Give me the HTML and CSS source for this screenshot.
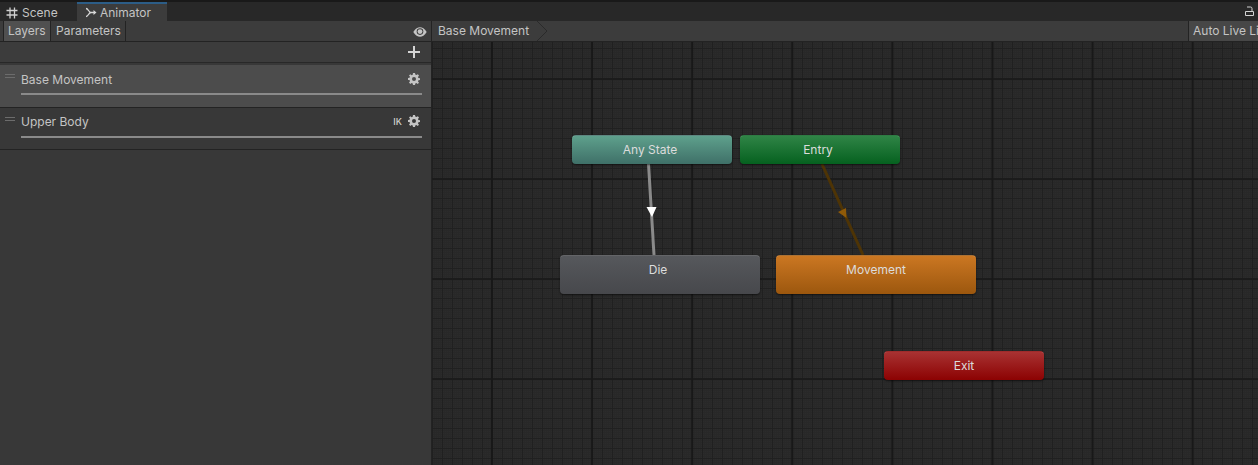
FILE: index.html
```html
<!DOCTYPE html>
<html lang="en">
<head>
<meta charset="utf-8">
<title>Animator</title>
<link rel="stylesheet" href="styles.css">
</head>
<body>
<div class="window">
  <div class="tabbar">
    <div class="tab">
      <svg class="tab-icon" viewBox="0 0 12 12"><path d="M4 .5v11M8.500 .5v11M.5 3.500h11M.5 8h11" stroke="#d0d0d0" stroke-width="1.300" fill="none"/></svg>
      <span>Scene</span>
    </div>
    <div class="tab tab-active">
      <svg class="tab-icon" viewBox="0 0 12 12"><path d="M1 1.500 C3.500 1.500 3.500 5.500 6 5.500 H10 M1 9.500 C3.500 9.500 3.500 5.500 6 5.500" stroke="#d8d8d8" stroke-width="1.300" fill="none"/><path d="M8.500 3 11.500 5.500 8.500 8z" fill="#d8d8d8"/></svg>
      <span>Animator</span>
    </div>
    <div class="spacer"></div>
    <svg class="lock" viewBox="0 0 9 10"><path d="M2 1H5.500Q7 1 7 2.500V5M.5 5.500h8v4h-8z" stroke="#d2d2d2" fill="none"/></svg>
  </div>
  <div class="main">
    <aside class="side">
      <div class="side-tools">
        <div class="toggle toggle-on">Layers</div>
        <div class="toggle">Parameters</div>
        <div class="spacer"></div>
        <svg class="eye" viewBox="0 0 14 10"><path d="M.3 5C2.500 1.400 4.700.3 7 .3S11.500 1.400 13.700 5C11.500 8.600 9.300 9.700 7 9.700S2.500 8.600.3 5z" fill="#c4c4c4"/><circle cx="7" cy="4.600" r="3.300" fill="#3c3c3c"/><circle cx="7" cy="4.600" r="2.400" fill="#c4c4c4"/></svg>
      </div>
      <div class="add-row"><span class="plus"></span></div>
      <div class="layer layer-selected">
        <div class="handle"></div>
        <div class="layer-body">
          <div class="layer-head">
            <span class="layer-name">Base Movement</span>
            <svg class="gear" viewBox="0 0 12 12"><use href="#gear"/></svg>
          </div>
          <div class="weight"></div>
        </div>
      </div>
      <div class="layer">
        <div class="handle"></div>
        <div class="layer-body">
          <div class="layer-head layer-head-raised">
            <span class="layer-name">Upper Body</span>
            <span class="ik">IK</span>
            <svg class="gear" viewBox="0 0 12 12"><use href="#gear"/></svg>
          </div>
          <div class="weight"></div>
        </div>
      </div>
    </aside>
    <section class="content">
      <div class="crumbs">
        <div class="crumb">Base Movement
          <svg class="crumb-arrow" viewBox="0 0 11 20"><path d="M0 0 L10 10 L0 20" stroke="#2a2a2a" fill="none"/></svg>
        </div>
        <div class="spacer"></div>
        <div class="live">Auto Live Link</div>
      </div>
      <div class="graph">
        <svg class="links" width="826" height="423" viewBox="0 0 826 423">
          <line x1="216.500" y1="122" x2="222" y2="213" stroke="#8a8a8a" stroke-width="3"/>
          <path d="M214.500 165 L224.500 165 L220 175z" fill="#fff"/>
          <line x1="390" y1="122" x2="431" y2="213" stroke="#4e3405" stroke-width="3"/>
          <path d="M406 170 L414 166 L414.500 176z" fill="#8f5a08"/>
        </svg>
        <div class="node node-any node-small"><span class="node-label-left">Any State</span></div>
        <div class="node node-entry node-small"><span class="node-label-left">Entry</span></div>
        <div class="node node-die node-big"><span class="node-label-left">Die</span></div>
        <div class="node node-move node-big">Movement</div>
        <div class="node node-exit node-small">Exit</div>
      </div>
    </section>
  </div>
</div>
<svg class="defs" width="0" height="0">
  <defs>
    <g id="gear">
      <path fill="#c4c4c4" fill-rule="evenodd" d="M5 0h2l.3 1.600 1.100.5L9.800 1.200 11 2.600l-1 1.300.4 1.100 1.600.2v1.800l-1.600.3-.4 1.100 1 1.300-1.300 1.300-1.300-1-1.100.5L7 12H5l-.3-1.600-1.100-.5-1.300 1L1 9.500l1-1.300-.5-1.100L0 6.900V5l1.500-.2.500-1.100-1-1.200 1.300-1.300 1.300 1 1.100-.5zM6 4a2 2 0 1 0 0 4 2 2 0 0 0 0-4z"/>
    </g>
  </defs>
</svg>
</body>
</html>
```
FILE: styles.css
```css
* { box-sizing: border-box; }
html, body { margin: 0; height: 100%; overflow: hidden; }
body { background: #191919; font-family: Inter, "Liberation Sans", sans-serif; font-size: 12px; color: #c4c4c4; }
.window { width: 1258px; height: 465px; padding-top: 2px; display: flex; flex-direction: column; }
.spacer { flex: 1; }

.tabbar { height: 19px; background: #282828; display: flex; align-items: stretch; flex: none; }
.tab { width: 77px; display: flex; align-items: center; padding-left: 6px; gap: 4px; padding-top: 2px; }
.tab-active { width: 90px; background: #3c3c3c; border-top: 2px solid #2c5d87; padding-top: 0; padding-left: 8px; gap: 3px; }
.tab-icon { width: 12px; height: 12px; flex: none; }
.lock { width: 9px; height: 10px; margin: 4px 4px 0 0; }

.main { flex: 1; display: flex; min-height: 0; }
.side { width: 432px; flex: none; background: #383838; border-right: 1px solid #232323; }
.side-tools { height: 21px; background: #3c3c3c; border-bottom: 1px solid #232323; display: flex; padding-left: 3px; align-items: stretch; }
.toggle { padding: 0 4px 0 5px; line-height: 20px; border-right: 1px solid #232323; background: #3c3c3c; white-space: nowrap; }
.toggle-on { background: #505050; width: 48px; border-left: 1px solid #232323; padding-left: 4px; }
.eye { width: 14px; height: 10px; margin: 6px 4px 0 0; }
.add-row { height: 21px; background: #3c3c3c; border-bottom: 1px solid #282828; display: flex; justify-content: flex-end; align-items: center; padding-right: 11px; }
.plus { width: 12px; height: 12px; background: linear-gradient(#d4d4d4, #d4d4d4) center / 12px 2px no-repeat, linear-gradient(#d4d4d4, #d4d4d4) center / 2px 12px no-repeat; }

.layer { height: 42px; display: flex; padding-left: 5px; border-bottom: 1px solid #232323; background: #383838; }
.layer-selected { margin-top: 2px; height: 43px; background: #4c4c4c; }
.handle { width: 10px; height: 4px; margin-top: 9px; border-top: 1px solid #6c6c6c; border-bottom: 1px solid #6c6c6c; flex: none; }
.layer-body { margin-left: 6px; width: 401px; display: flex; flex-direction: column; }
.layer-head { height: 28px; display: flex; align-items: center; }
.layer-head-raised { padding-bottom: 2px; }
.layer-name { flex: 1; }
.ik { font-size: 9px; font-weight: 500; margin-right: 6px; color: #d0d0d0; }
.gear { width: 12px; height: 12px; margin-right: 2px; }
.weight { height: 2px; background: #8a8a8a; }

.content { flex: 1; display: flex; flex-direction: column; min-width: 0; }
.crumbs { height: 21px; flex: none; background: #3c3c3c; border-bottom: 1px solid #232323; display: flex; }
.crumb { position: relative; padding-left: 6px; line-height: 20px; width: 105px; }
.crumb-arrow { position: absolute; left: 105px; top: 0; width: 11px; height: 20px; }
.live { width: 70px; padding-left: 4px; line-height: 20px; white-space: nowrap; overflow: hidden; background: #474747; border-left: 1px solid #232323; flex: none; }

.graph {
  position: relative; flex: 1; overflow: hidden; background-color: #2b2b2b;
  background-image:
    linear-gradient(90deg, #181818 2px, transparent 2px),
    linear-gradient(#1b1b1b 2px, transparent 2px),
    linear-gradient(90deg, #202020 1px, transparent 1px),
    linear-gradient(#202020 1px, transparent 1px),
    linear-gradient(90deg, #282828 1px, transparent 1px),
    linear-gradient(#282828 1px, transparent 1px);
  background-size: 100.1px 100px, 100px 100px, 10px 10px, 10px 10px, 2px 2px, 2px 2px;
  background-position: 59px 0, 0 36px, 0 0, 0 6px, 0 0, 0 0;
}
.links { position: absolute; left: 0; top: 0; }
.node { position: absolute; border-radius: 4px; text-align: center; color: #dcdcdc; box-shadow: 0 1px 2px rgba(0,0,0,.55); border-top: 1px solid rgba(255,255,255,.16); }
.node-label-left { position: relative; left: -2px; }
.node-small { width: 160px; height: 29px; line-height: 27px; }
.node-big { width: 200px; height: 39px; line-height: 27px; }
.node-any { left: 140px; top: 93px; background: linear-gradient(#5ea08c, #3f7068); }
.node-entry { left: 308px; top: 93px; background: linear-gradient(#2f8446, #05611f); }
.node-die { left: 128px; top: 213px; background: linear-gradient(#56585c, #47484c); }
.node-move { left: 344px; top: 213px; background: linear-gradient(#cb7722, #9c570e); }
.node-exit { left: 452px; top: 309px; background: linear-gradient(#a83232, #8c0202); }
.defs { position: absolute; }
```
